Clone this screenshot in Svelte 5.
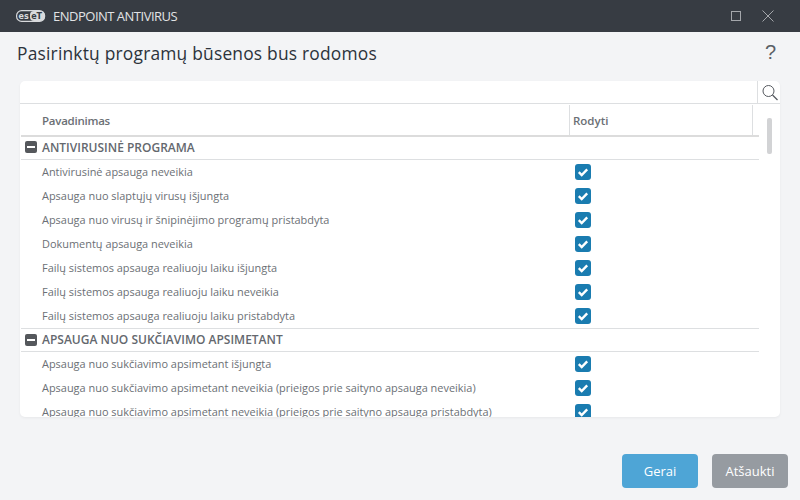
<script>
    const groups = [
        {
            name: 'ANTIVIRUSINĖ PROGRAMA',
            items: [
                'Antivirusinė apsauga neveikia',
                'Apsauga nuo slaptųjų virusų išjungta',
                'Apsauga nuo virusų ir šnipinėjimo programų pristabdyta',
                'Dokumentų apsauga neveikia',
                'Failų sistemos apsauga realiuoju laiku išjungta',
                'Failų sistemos apsauga realiuoju laiku neveikia',
                'Failų sistemos apsauga realiuoju laiku pristabdyta'
            ]
        },
        {
            name: 'APSAUGA NUO SUKČIAVIMO APSIMETANT',
            items: [
                'Apsauga nuo sukčiavimo apsimetant išjungta',
                'Apsauga nuo sukčiavimo apsimetant neveikia (prieigos prie saityno apsauga neveikia)',
                'Apsauga nuo sukčiavimo apsimetant neveikia (prieigos prie saityno apsauga pristabdyta)'
            ]
        }
    ];
</script>

<div class="window">
    <header class="titlebar">
        <div class="brand">
            <svg class="logo" width="30" height="12" viewBox="0 0 30 12">
                <rect x="0.6" y="0.6" width="28" height="10.8" rx="5" fill="none" stroke="#d8dadc" stroke-width="1.2" />
                <rect x="14" y="1" width="14.5" height="10" rx="4" fill="#d8dadc" />
                <text x="2.6" y="9" class="logo-e">es</text>
                <text x="15.2" y="9" class="logo-b">eT</text>
            </svg>
            <span class="product">ENDPOINT ANTIVIRUS</span>
        </div>
        <div class="controls">
            <svg width="12" height="12" viewBox="0 0 12 12"><rect x="1.5" y="1.5" width="9" height="9" fill="none" stroke="#a4a7ab" stroke-width="1" /></svg>
            <svg width="14" height="14" viewBox="0 0 14 14"><path d="M1.5 1.5 L12.5 12.5 M12.5 1.5 L1.5 12.5" fill="none" stroke="#a4a7ab" stroke-width="1" /></svg>
        </div>
    </header>

    <main class="content">
        <div class="heading">
            <h1>Pasirinktų programų būsenos bus rodomos</h1>
            <span class="help">?</span>
        </div>

        <section class="card">
            <div class="search">
                <div class="search-btn">
                    <svg width="18" height="18" viewBox="0 0 18 18">
                        <circle cx="7.5" cy="7" r="5.5" fill="none" stroke="#55595f" stroke-width="1" />
                        <path d="M11.5 11 L16.5 16" stroke="#55595f" stroke-width="1.2" />
                    </svg>
                </div>
            </div>
            <div class="body">
                <div class="table">
                    <div class="thead">
                        <div class="col-name">Pavadinimas</div>
                        <div class="col-show">Rodyti</div>
                        <div class="col-rest"></div>
                    </div>
                    {#each groups as group, g}
                        <div class="group" class:first={g === 0}>
                            <span class="minus"><i></i></span>
                            {group.name}
                        </div>
                        {#each group.items as item}
                            <div class="row">
                                <div class="row-name">{item}</div>
                                <div class="row-check">
                                    <svg width="16" height="16" viewBox="0 0 16 16">
                                        <rect width="16" height="16" rx="3" fill="#1a7cb0" />
                                        <path d="M3.8 8.2 L6.7 11 L12.2 5.4" fill="none" stroke="#fff" stroke-width="2.4" />
                                    </svg>
                                </div>
                            </div>
                        {/each}
                    {/each}
                </div>
                <div class="scroll"><div class="thumb"></div></div>
            </div>
        </section>
    </main>

    <footer class="footer">
        <button class="btn primary">Gerai</button>
        <button class="btn secondary">Atšaukti</button>
    </footer>
</div>

<style>
    :global(body) {
        margin: 0;
    }

    .window {
        width: 800px;
        height: 500px;
        display: flex;
        flex-direction: column;
        background: #f3f4f6;
        font-family: 'Open Sans', 'Noto Sans', sans-serif;
        overflow: hidden;
    }

    .titlebar {
        height: 32px;
        flex: none;
        display: flex;
        align-items: center;
        justify-content: space-between;
        background: #373c43;
        padding: 0 25px 0 16px;
    }

    .brand {
        display: flex;
        align-items: center;
        gap: 7px;
    }

    .logo-e,
    .logo-b {
        font-family: 'DejaVu Sans', sans-serif;
        font-size: 8px;
        font-weight: 700;
    }

    .logo-e {
        fill: #d8dadc;
    }

    .logo-b {
        fill: #373c43;
    }

    .product {
        font-size: 13px;
        color: #e2e3e5;
        letter-spacing: -0.5px;
    }

    .controls {
        display: flex;
        align-items: center;
        gap: 19px;
    }

    .controls svg {
        display: block;
    }

    .content {
        flex: none;
        display: flex;
        flex-direction: column;
        padding: 0 20px;
    }

    .heading {
        height: 49px;
        display: flex;
        align-items: center;
        justify-content: space-between;
        margin-left: -3px;
        padding-bottom: 8px;
        padding-right: 1px;
        box-sizing: border-box;
    }

    h1 {
        margin: 0;
        font-size: 17.4px;
        font-weight: 400;
        color: #2c333b;
        letter-spacing: 0.2px;
    }

    .help {
        font-family: 'Liberation Sans', sans-serif;
        font-size: 20px;
        color: #5a5f65;
        padding-right: 3px;
    }

    .card {
        height: 336px;
        background: #fff;
        border-radius: 5px;
        overflow: hidden;
        box-shadow: 0 1px 3px rgba(0, 0, 0, 0.05);
    }

    .search {
        height: 22px;
        display: flex;
        justify-content: flex-end;
        border-bottom: 1px solid #dddfe1;
    }

    .search-btn {
        width: 23px;
        border-left: 1px solid #dddfe1;
        padding: 3px 0 0 3px;
        box-sizing: border-box;
    }

    .search-btn svg {
        display: block;
    }

    .body {
        display: flex;
    }

    .table {
        width: 738px;
        flex: none;
        margin-left: 1px;
        font-size: 10.95px;
        color: #6b6f75;
    }

    .thead {
        height: 31px;
        display: flex;
        border-bottom: 2px solid #dcdcdc;
        font-weight: 600;
        color: #6b6f75;
        font-size: 11.5px;
    }

    .thead > div {
        margin-top: 1px;
        display: flex;
        align-items: center;
    }

    .col-name {
        width: 549px;
        padding-left: 21px;
        box-sizing: border-box;
        border-right: 1px solid #dddfe1;
        letter-spacing: -0.25px;
    }

    .col-show {
        width: 183px;
        padding-left: 3px;
        box-sizing: border-box;
        border-right: 1px solid #dddfe1;
    }

    .group {
        height: 24px;
        display: flex;
        align-items: center;
        gap: 5px;
        padding: 0 0 1px 4px;
        box-sizing: border-box;
        font-weight: 600;
        font-size: 12px;
        color: #64686e;
        border-top: 1px solid #dddfe1;
        border-bottom: 1px solid #dddfe1;
    }

    .group.first {
        height: 23px;
        padding-bottom: 2px;
        border-top: 0;
    }

    .minus {
        width: 12px;
        height: 12px;
        border-radius: 2px;
        background: #55585c;
        display: flex;
        align-items: center;
        justify-content: center;
    }

    .minus i {
        width: 8px;
        height: 2px;
        background: #fff;
    }

    .row {
        height: 24px;
        display: flex;
        align-items: center;
    }

    .row-name {
        width: 554px;
        padding: 0 0 2px 21px;
        box-sizing: border-box;
        white-space: nowrap;
    }

    .row-check svg {
        display: block;
    }

    .scroll {
        flex: 1;
        padding: 14px 0 0 8px;
    }

    .thumb {
        width: 5px;
        height: 36px;
        border-radius: 2px;
        background: #d2d3d5;
    }

    .footer {
        flex: 1;
        display: flex;
        justify-content: flex-end;
        align-items: flex-start;
        gap: 14px;
        padding: 37px 12px 0 0;
        box-sizing: border-box;
    }

    .btn {
        width: 76px;
        height: 34px;
        border: 0;
        border-radius: 4px;
        color: #fff;
        font-family: inherit;
        font-size: 13px;
    }

    .primary {
        background: #4ea5d6;
    }

    .secondary {
        background: #969ba1;
    }
</style>
